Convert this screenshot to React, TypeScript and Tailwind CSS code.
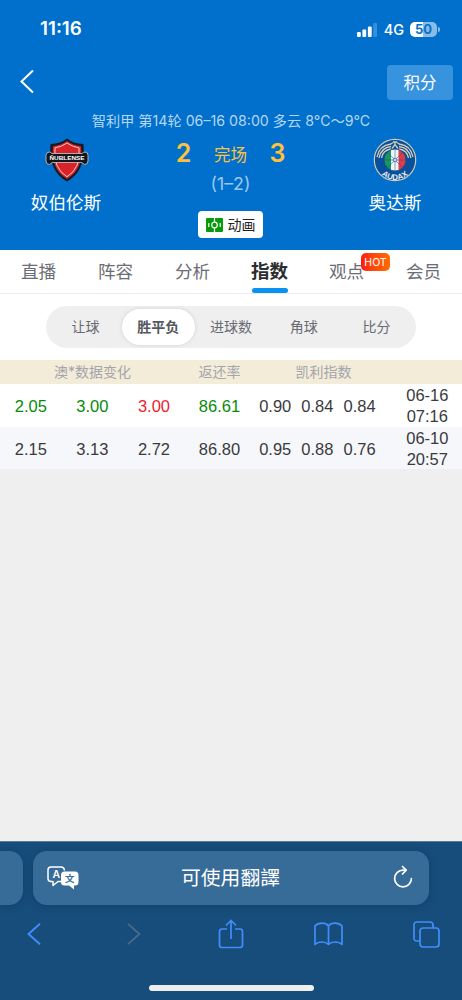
import React from 'react';

const tabs = ['直播', '阵容', '分析', '指数', '观点', '会员'];
const markets = ['让球', '胜平负', '进球数', '角球', '比分'];

const rows = [
  {
    odds: ['2.05', '3.00', '3.00'],
    colors: ['text-[#078a0b]', 'text-[#078a0b]', 'text-[#ee2230]'],
    rate: '86.61',
    rateColor: 'text-[#078a0b]',
    kelly: ['0.90', '0.84', '0.84'],
    date: '06-16',
    time: '07:16',
    bg: 'bg-white h-[43px] pb-px',
  },
  {
    odds: ['2.15', '3.13', '2.72'],
    colors: ['text-[#3a3a3d]', 'text-[#3a3a3d]', 'text-[#3a3a3d]'],
    rate: '86.80',
    rateColor: 'text-[#3a3a3d]',
    kelly: ['0.95', '0.88', '0.76'],
    date: '06-10',
    time: '20:57',
    bg: 'bg-[#f6f7fa] h-[42px]',
  },
];

const HomeCrest = () => (
  <svg className="ml-[2px]" width="44" height="44" viewBox="0 0 44 44">
    <path d="M22 .5 Q16 5.500 5.500 6 Q3 33 22 43.500 Q41 33 38.500 6 Q28 5.500 22 .5Z" fill="#171a22" />
    <path d="M22 3 Q16 7.500 8 8.200 Q5.500 31 22 41 Q38.500 31 36 8.200 Q28 7.500 22 3Z" fill="#d92329" />
    <path d="M22 5 Q16.500 9 10 9.800 Q7.800 30 22 38.800 Q36.200 30 34 9.800 Q27.500 9 22 5Z" fill="none" stroke="#f6c9cb" strokeWidth="1" />
    <path d="M4.500 14 Q1 14 1 17.500 V23 Q1 26.500 4.500 26.500 Q6 24.800 8 24.500 H36 Q38 24.800 39.500 26.500 Q43 26.500 43 23 V17.500 Q43 14 40 14 Q38 14.500 37 15.500 H7 Q6 14.500 4.500 14Z" fill="#14161c" stroke="#b9bcc2" strokeWidth=".9" />
    <text x="22" y="22" textAnchor="middle" fontSize="5.600" fontWeight="700" fill="#fff" textLength="35" lengthAdjust="spacingAndGlyphs" className="font-['Liberation_Sans',sans-serif]">ÑUBLENSE</text>
  </svg>
);

const AwayCrest = () => (
  <svg width="44" height="44" viewBox="0 0 44 44">
    <defs>
      <clipPath id="ball">
        <circle cx="22" cy="22" r="11" />
      </clipPath>
    </defs>
    <circle cx="22" cy="22" r="20.700" fill="#07509d" stroke="#d3c9b0" strokeWidth="1.200" />
    <g fill="none" stroke="#d9ceb3" strokeWidth="1.300">
      <path d="M4 19 Q6 7.500 18 6 L20 4.500" />
      <path d="M6 20 Q8 9.500 18 8.500" />
      <path d="M8.500 20 Q10 12 18 11" />
      <path d="M40 19 Q38 7.500 26 6 L24 4.500" />
      <path d="M38 20 Q36 9.500 26 8.500" />
      <path d="M35.500 20 Q34 12 26 11" />
      <path d="M20 4 H24 M22 4 V8 M19 10.500 L22 6.500 L25 10.500" />
    </g>
    <g clipPath="url(#ball)">
      <rect x="11" y="11" width="7.500" height="22" fill="#18975e" />
      <rect x="18" y="11" width="8" height="22" fill="#f0f3f7" />
      <rect x="25.500" y="11" width="8" height="22" fill="#df3c48" />
      <path d="M22 11V33 M11 22H33 M14 14L30 30 M30 14L14 30" stroke="#1c4f8c" strokeWidth=".5" />
      <circle cx="22" cy="22" r="1.800" fill="#c4d3e6" stroke="#1c4f8c" strokeWidth=".6" />
    </g>
    <circle cx="22" cy="22" r="11" fill="none" stroke="#174a84" strokeWidth=".8" />
    <path id="name-arc" d="M5 32 A19.500 19.500 0 0 0 39 32" fill="none" />
    <text fontSize="8" fontWeight="700" fill="#e8edf2" letterSpacing="0.2" className="font-['Liberation_Sans',sans-serif]">
      <textPath href="#name-arc" startOffset="50%" textAnchor="middle">AUDAX</textPath>
    </text>
  </svg>
);

const StatusBar = () => (
  <div className="flex h-[59px] items-center justify-between pl-10 pr-[22px]">
    <span className="text-[18.800px] font-semibold">11:16</span>
    <div className="flex items-center">
      <svg width="20" height="14" viewBox="0 0 20 14" fill="#fff">
        <rect x="0" y="9" width="3.800" height="5" rx="1" />
        <rect x="5.400" y="6.500" width="3.800" height="7.500" rx="1" />
        <rect x="10.900" y="3.500" width="3.800" height="10.500" rx="1" />
        <rect x="16.200" y="0" width="3.800" height="14" rx="1" opacity=".22" />
      </svg>
      <span className="ml-[7px] mt-px text-[14.500px] font-medium leading-none">4G</span>
      <div className="ml-[6px] flex h-[15px] w-[27px] items-center justify-center rounded-[5px] bg-[linear-gradient(90deg,#fff_50%,#8abce9_50%)] text-[13px] font-bold leading-none text-[#0872cc]">
        50
      </div>
      <div className="ml-px h-[5px] w-[2px] rounded-r-full bg-[#8abce9]" />
    </div>
  </div>
);

const MatchHeader = () => (
  <header className="h-[250px] bg-[#0070cc] text-white">
    <StatusBar />
    <div className="flex h-[49px] items-start justify-between pl-5 pr-[9px] pt-[6px]">
      <svg className="mt-1" width="14" height="25" viewBox="0 0 14 25" fill="none" stroke="#fff" strokeWidth="2">
        <path d="M13 1.500 L1.500 12.500 L13 23.500" />
      </svg>
      <button className="h-[35px] w-[66px] rounded bg-[#3893df] pt-px text-[16.500px]">积分</button>
    </div>
    <p className="h-[27px] whitespace-nowrap text-center text-[14.200px] leading-[25px] text-[#b5d6f3]">
      智利甲 第14轮 06–16 08:00 多云 8°C～9°C
    </p>
    <div className="flex justify-between">
      <div className="flex w-[132px] flex-col items-center pt-[3px]">
        <HomeCrest />
        <span className="mt-2 text-[17.600px] leading-[26px]">奴伯伦斯</span>
      </div>
      <div className="flex flex-col items-center pl-px">
        <div className="flex h-[38px] items-center text-[#fcc13d]">
          <span className="-mt-[3px] flex w-[15px] justify-center text-[25px] font-semibold leading-[34px]">2</span>
          <span className="mx-[23px] mt-[2px] text-[16.500px] leading-6">完场</span>
          <span className="-mt-[3px] flex w-[15px] justify-center text-[25px] font-semibold leading-[34px]">3</span>
        </div>
        <span className="text-[17.800px] leading-[22px] text-[#9bc8ef]">(1–2)</span>
        <button className="mt-4 flex h-[27px] w-[65px] items-center justify-center gap-[5px] rounded bg-white text-[14px] leading-none text-[#222]">
          <svg width="17" height="14" viewBox="0 0 17 14">
            <rect width="17" height="14" rx="1" fill="#079b0b" />
            <g fill="none" stroke="#fff" strokeWidth="1.200">
              <circle cx="8.500" cy="7" r="2.800" />
              <path d="M8.500 0V4 M8.500 10V14 M2.800 5V9 M14.200 5V9" />
            </g>
          </svg>
          动画
        </button>
      </div>
      <div className="flex w-[134px] flex-col items-center pt-[3px]">
        <AwayCrest />
        <span className="mt-2 text-[17.600px] leading-[26px]">奥达斯</span>
      </div>
    </div>
  </header>
);

const TabBar = () => (
  <nav className="grid h-11 grid-cols-6 border-b border-[#ececee] bg-white">
    {tabs.map((tab) => (
      <div key={tab} className="relative flex justify-center">
        <span className={tab === '指数' ? 'text-[18.500px] font-bold leading-[43px] text-[#2c2d30]' : 'text-[17.600px] leading-[43px] text-[#6b6d74]'}>
          {tab}
        </span>
        {tab === '指数' && <i className="absolute top-[38px] h-[5px] w-[36px] rounded-full bg-[#0b91ef]" />}
        {tab === '观点' && (
          <span className="absolute left-[53px] top-[3px] flex h-[18px] w-[29px] items-center justify-center rounded-[5px] bg-gradient-to-r from-[#ff1512] to-[#ff6c00] pt-px text-[10.500px] text-white">
            HOT
          </span>
        )}
      </div>
    ))}
  </nav>
);

const BrowserBar = () => (
  <footer className="flex h-[159px] flex-col border-t border-[#587d9c] bg-[#174d7a]">
    <div className="mt-[9px] flex h-[54px] gap-[10px]">
      <div className="w-[23px] rounded-r-[14px] bg-[#376c99] shadow-[0_1px_8px_rgba(0,20,50,0.22)]" />
      <div className="flex w-[396px] items-center rounded-[14px] bg-[#376c99] pl-[14px] pr-[16px] text-white shadow-[0_1px_8px_rgba(0,20,50,0.22)]">
        <svg width="32" height="24" viewBox="0 0 32 24">
          <path d="M14 15.500 H11 L6 19.500 V15.500 H4 Q1 15.500 1 12.500 V4 Q1 1 4 1 H14 Q17 1 17.500 4.500" fill="none" stroke="#fff" strokeWidth="1.500" strokeLinejoin="round" />
          <text x="9.300" y="12" textAnchor="middle" fontSize="10.500" fontWeight="600" fill="#fff">A</text>
          <path d="M17.500 5.500 H28 Q31.500 5.500 31.500 9 V16 Q31.500 19.500 28 19.500 H27 V23.500 L22 19.500 H17.500 Q14 19.500 14 16 V9 Q14 5.500 17.500 5.500Z" fill="#fff" />
          <text x="22.700" y="16" textAnchor="middle" fontSize="9.500" fontWeight="700" fill="#376c99">文</text>
        </svg>
        <span className="mt-[2px] flex-1 pr-[11px] text-center text-[19.800px] font-['Inter','Noto_Sans_CJK_TC',sans-serif]">可使用翻譯</span>
        <svg className="-mt-[3px]" width="20" height="24" viewBox="0 0 20 24" fill="none" stroke="#fff" strokeWidth="1.700" strokeLinecap="round" strokeLinejoin="round">
          <path d="M12.500 5.100 H10 A8.400 8.400 0 1 0 18.400 13.500" />
          <path d="M9.500 1.500 L13.200 5.100 L9.500 9" />
        </svg>
      </div>
    </div>
    <div className="mt-[13px] grid h-8 grid-cols-[repeat(5,98px)] items-center justify-center justify-items-center pr-[2px]">
      <svg width="14" height="24" viewBox="0 0 14 24" fill="none" stroke="#428dfb" strokeWidth="1.900">
        <path d="M13 1.800 L1.500 12 L13 22.200" />
      </svg>
      <svg className="ml-1" width="14" height="24" viewBox="0 0 14 24" fill="none" stroke="#486b8a" strokeWidth="1.800">
        <path d="M1 1.800 L12.500 12 L1 22.200" />
      </svg>
      <svg className="ml-[2px]" width="26" height="30" viewBox="0 0 26 30" fill="none" stroke="#428dfb" strokeWidth="1.700">
        <path d="M9 10 H4 Q1.500 10 1.500 12.500 V26 Q1.500 28.500 4 28.500 H22 Q24.500 28.500 24.500 26 V12.500 Q24.500 10 22 10 H17" />
        <path d="M13 20 V2 M8 6.500 L13 1.500 L18 6.500" />
      </svg>
      <svg width="29" height="24" viewBox="0 0 29 24" fill="none" stroke="#428dfb" strokeWidth="1.700" strokeLinejoin="round">
        <path d="M14.500 4 Q12.500 1.200 8 1.200 Q3.500 1.200 1 4 V22.500 Q3.500 20 8 20 Q12 20 14.500 22.500 Q17 20 21 20 Q25.500 20 28 22.500 V4 Q25.500 1.200 21 1.200 Q16.500 1.200 14.500 4Z M14.500 4V22.500" />
      </svg>
      <svg width="27" height="27" viewBox="0 0 27 27" fill="none" stroke="#428dfb" strokeWidth="1.700">
        <path d="M7 20 H4 Q1 20 1 17 V4 Q1 1 4 1 H17 Q20 1 20 4 V7" />
        <rect x="7" y="7" width="19" height="19" rx="3" />
      </svg>
    </div>
    <div className="ml-[149px] mt-[35px] h-[6px] w-[165px] rounded-full bg-[#efefef]" />
  </footer>
);

const App = () => {
  return (
    <div className="flex h-[1000px] w-[462px] flex-col overflow-hidden bg-[#efefef] font-['Inter','Noto_Sans_CJK_SC',sans-serif]">
      <MatchHeader />
      <TabBar />

      {/* Odds market switch */}
      <div className="h-[66px] bg-white pt-3">
        <div className="ml-[46px] grid h-[42px] w-[370px] grid-cols-5 rounded-full bg-[#efefef] px-[3px] py-[3px] text-[14px] leading-[36px] text-[#696b72]">
          {markets.map((market) => (
            <div
              key={market}
              className={market === '胜平负' ? 'rounded-full bg-white text-center font-bold text-[#55575e] shadow-[0_0_4px_rgba(0,0,0,0.12)]' : 'text-center'}
            >
              {market}
            </div>
          ))}
        </div>
      </div>

      {/* Odds history */}
      <div className="grid h-6 grid-cols-[40%_15%_30%_15%] bg-[#f3ecd8] text-center text-[14px] leading-6 text-[#a3a5ad]">
        <span>澳*数据变化</span>
        <span>返还率</span>
        <span>凯利指数</span>
      </div>
      {rows.map((row) => (
        <div
          key={row.date}
          className={`grid grid-cols-[40%_15%_30%_15%] items-center text-center text-[16.500px] leading-[21px] text-[#3a3a3d] font-['Liberation_Sans',sans-serif] ${row.bg}`}
        >
          <div className="grid grid-cols-3 pt-px">
            {row.odds.map((odd, i) => (
              <span key={i} className={row.colors[i]}>{odd}</span>
            ))}
          </div>
          <span className={`pt-px ${row.rateColor}`}>{row.rate}</span>
          <div className="flex pr-3 pt-px">
            {row.kelly.map((value, i) => (
              <span key={i} className="flex-1">{value}</span>
            ))}
          </div>
          <div className="pt-px">
            {row.date}
            <br />
            {row.time}
          </div>
        </div>
      ))}

      <div className="flex-1" />
      <BrowserBar />
    </div>
  );
};

export default App;
